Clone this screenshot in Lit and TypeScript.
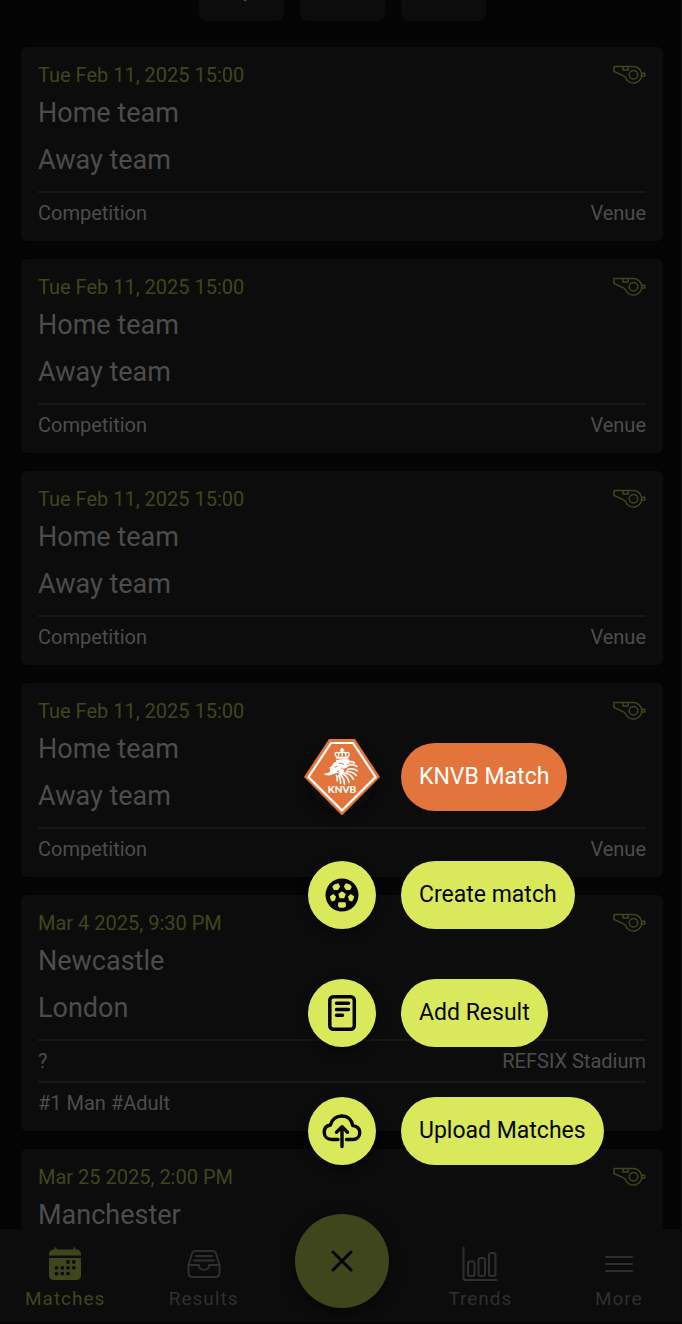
import { css, html, svg, LitElement } from "lit";
import { customElement, property, state } from "lit/decorators.js";
import { classMap } from "lit/directives/class-map.js";

interface Match {
  date: string;
  home: string;
  away?: string;
  competition?: string;
  venue?: string;
  tags?: string;
}

const template = { date: "Tue Feb 11, 2025 15:00", home: "Home team", away: "Away team", competition: "Competition", venue: "Venue" };

const MATCHES: Match[] = [
  template,
  template,
  template,
  template,
  { date: "Mar 4 2025, 9:30 PM", home: "Newcastle", away: "London", competition: "?", venue: "REFSIX Stadium", tags: "#1 Man #Adult" },
  { date: "Mar 25 2025, 2:00 PM", home: "Manchester" },
];

const icons = {
  whistle: svg`<svg width="34" height="20" viewBox="0 0 34 20" fill="none" stroke="currentColor" stroke-width="1.5" stroke-linejoin="round">
    <path d="M2 1.500H21a8.300 8.300 0 1 1-7.400 11.200C13.100 11.700 12.500 11.300 11.500 10.900L2 6.500z"/>
    <path d="M11 1.500v3.500h5.200V1.500"/>
    <circle cx="21.500" cy="9.800" r="4.300"/>
    <path d="M29.800 8.300h2.900v2.800h-2.900"/>
  </svg>`,
  knvb: svg`<svg width="78" height="78" viewBox="0 0 78 78">
    <path d="M26 1H52L77 39 39 77.500 1 39z" fill="#e3743b"/>
    <path d="M28 5H50L72.500 39 39 72.500 5.500 39z" fill="none" stroke="#fff" stroke-width="2.200"/>
    <g fill="#fff">
      <path d="M38.200 10h1.800v1.200h1.200v1.600H40V14h-1.800v-1.200H37v-1.600h1.200z"/>
      <path d="M33 18.800h12.600l-.5 1.900H33.500z"/>
      <path d="M26.500 29.500l2.300-1.500c1-2.400 2.400-4 4.800-4.600l-.9-1.600c2.600.3 4.300-.3 6.500-.8 3.400-.7 6.200 0 8.300 1.200l-3 1 2.500 2.500-3.500.5 1 3-3.500 1.500.5 3.500-4 3.700-2.300-3.200-3.200.8-3.500 1.300c-1.500.6-2.200 1-3.700.6-1.500-.5-2.900.1-4.100-1.600 1.600.3 2-.9 3.800-.7 1.400 0 2.300-1 2.600-2z"/>
    </g>
    <g fill="none" stroke="#fff" stroke-width="1.300" stroke-linecap="round">
      <path d="M33.300 18.500c-3-3 .2-5.300 2.200-3.300v3M45 18.500c3-3-.2-5.300-2.200-3.300v3M36 15.500c.5-2 5.800-2 6.300 0M39.100 13.500V18"/>
    </g>
    <g fill="none" stroke="#fff" stroke-width="1.700" stroke-linecap="round">
      <path d="M43 24.500c3.500-1.300 5.800-1.300 8.300.3M44 28c3.500-2 6.500-2 9.800.4M44.500 31.500c3.500-1.300 6.500-1 9.700 1.200M43.500 33.500c4-.2 7 1 9.700 3.800M42 35c3.800.6 6.500 2.500 8.300 6M40 36c3 1.300 5 3.800 6 8.300M38 37.500c2.200 2 3.200 4.700 3.500 8.700M35.800 37.500c1.500 2.500 2 5 1.700 7.700M33.500 37.500c.8 1.800 1 3.500.7 5.200"/>
    </g>
    <g fill="none" stroke="#e3743b" stroke-width="1">
      <path d="M31.500 29.200l3-1M36 25.500c2.200-.4 3.700 0 5 1M38 30c2 .2 3.500 1.500 4 3.500M34 33l2.500 1.200"/>
    </g>
    <text x="39" y="55" class="crest" text-anchor="middle" fill="#fff">KNVB</text>
  </svg>`,
  football: svg`<svg width="34" height="34" viewBox="0 0 34 34">
    <circle cx="17" cy="17" r="16.500" fill="#050505"/>
    <g fill="#d9e95b">
      <path d="M17 13.300l3.700 2.700-1.400 4.300h-4.600L13.300 16z"/>
      <path d="M9.200 6.500l4-1.200 2 3.300-2.300 3.300-4 .2-1.700-3.300z"/>
      <path d="M24.800 6.500l-4-1.200-2 3.300 2.300 3.300 4 .2 1.700-3.300z"/>
      <path d="M5 18.300l3.300-2.300 2.700 2.600-1 4-3 .8C5.700 22 5 20.200 5 18.300z"/>
      <path d="M29 18.300l-3.300-2.300-2.700 2.600 1 4 3 .8c1.300-1.400 2-3.200 2-5.100z"/>
      <path d="M13.500 24.200h7l.7 3.800-2 1.800h-4.400l-2-1.800z"/>
    </g>
  </svg>`,
  note: svg`<svg width="34" height="38" viewBox="0 0 34 38" fill="none" stroke="#050505" stroke-width="3.500" stroke-linecap="round">
    <rect x="4.800" y="2.800" width="24.500" height="32.500" rx="3.500"/>
    <path d="M11.500 9.300h12M11.500 15.500h12M11.500 21.300h6"/>
  </svg>`,
  upload: svg`<svg width="42" height="38" viewBox="0 0 42 38" fill="none" stroke="#050505" stroke-width="3.400" stroke-linecap="round" stroke-linejoin="round">
    <path d="M17 27.500H11c-4.500 0-7.800-3-7.800-7.200 0-4 2.400-6.700 6.200-7.300C10.800 7.500 15.400 4 20.800 4c5.700 0 10 3.800 10.900 9.600 4.300.5 7.100 3.100 7.100 6.900 0 4.400-3.300 7-7.200 7H25.500"/>
    <path d="M21 34.500V15M15.500 20.200l5.500-5.500 5.500 5.500"/>
  </svg>`,
  close: svg`<svg width="26" height="26" viewBox="0 0 26 26" fill="none" stroke="#050505" stroke-width="3" stroke-linecap="round">
    <path d="M4 4l18 18M22 4L4 22"/>
  </svg>`,
  calendar: svg`<svg width="36" height="36" viewBox="0 0 36 36" fill="currentColor">
    <path d="M2 9.500V8a4.500 4.500 0 0 1 4.500-4.500H7.500V2.300a1 1 0 0 1 2 0v1.200h17V2.300a1 1 0 0 1 2 0v1.200h1A4.500 4.500 0 0 1 34 8v1.500z"/>
    <path d="M2 12h32v17.500a4.500 4.500 0 0 1-4.500 4.500h-23A4.500 4.500 0 0 1 2 29.500z"/>
    <g fill="#0c0c0c">
      ${[[21, 16], [26.8, 16], [9.5, 21.8], [15.3, 21.8], [21, 21.8], [26.8, 21.8], [9.5, 27.6], [15.3, 27.6], [21, 27.6]].map(
        ([x, y]) => svg`<circle cx=${x} cy=${y} r="1.9"/>`
      )}
    </g>
  </svg>`,
  tray: svg`<svg width="36" height="36" viewBox="0 0 36 36" fill="none" stroke="currentColor" stroke-width="2" stroke-linecap="round" stroke-linejoin="round">
    <path d="M2.500 19L6 7.500c.5-1.700 1.600-2.500 3.300-2.500h17.400c1.700 0 2.800.8 3.300 2.500L33.500 19v8c0 2.500-1.500 4-4 4h-23c-2.500 0-4-1.500-4-4z"/>
    <path d="M2.500 19h10.300c.2 2.800 2.200 4.800 5.200 4.800s5-2 5.200-4.800h10.300M10 10h16M8 14.500h20"/>
  </svg>`,
  chart: svg`<svg width="36" height="36" viewBox="0 0 36 36" fill="none" stroke="currentColor" stroke-width="2" stroke-linecap="round" stroke-linejoin="round">
    <path d="M1.500 1.500V32a2 2 0 0 0 2 2H34.500"/>
    <rect x="6" y="15.500" width="6.500" height="14.500" rx="2"/>
    <rect x="16.500" y="12" width="6.500" height="18" rx="2"/>
    <rect x="27" y="7" width="6.500" height="23" rx="2"/>
  </svg>`,
  menu: svg`<svg width="36" height="36" viewBox="0 0 36 36" fill="none" stroke="currentColor" stroke-width="2" stroke-linecap="round">
    <path d="M5 11h26M5 18h26M5 25h26"/>
  </svg>`,
};

@customElement("match-card")
class MatchCard extends LitElement {
  @property({ attribute: false }) match!: Match;

  static styles = css`
    :host {
      display: block;
      padding: 16px 17px 8px;
      border-radius: 6px;
      background: #0c0c0c;
      color: #4c4c4c;
      font-size: 20px;
    }
    .top,
    .row {
      display: flex;
      justify-content: space-between;
      align-items: center;
    }
    .top {
      height: 24px;
      color: #40461b;
    }
    .teams {
      padding: 3px 0 7px;
      font-size: 27px;
      line-height: 47px;
    }
    .row {
      border-top: 2px solid #171717;
      line-height: 40px;
    }
  `;

  render() {
    const { date, home, away, competition, venue, tags } = this.match;
    return html`
      <div class="top"><span>${date}</span>${icons.whistle}</div>
      <div class="teams">
        <div>${home}</div>
        ${away ? html`<div>${away}</div>` : ""}
      </div>
      ${competition ? html`<div class="row"><span>${competition}</span><span>${venue}</span></div>` : ""}
      ${tags ? html`<div class="row"><span>${tags}</span></div>` : ""}
    `;
  }
}

@customElement("tab-bar")
class TabBar extends LitElement {
  @state() active = "Matches";

  static styles = css`
    :host {
      display: block;
      background: #0c0c0c;
      border-bottom: 2px solid #060606;
    }
    nav {
      display: grid;
      grid-template-columns: repeat(5, 1fr);
      margin: 0 -6px 0 -4px;
      padding: 17px 0 10px;
    }
    a {
      display: flex;
      flex-direction: column;
      align-items: center;
      gap: 3px;
      color: #2f2f2f;
      font-size: 19px;
      line-height: 27px;
      letter-spacing: 1px;
      text-decoration: none;
    }
    .active {
      color: #40461b;
    }
  `;

  tab(label: string, icon: unknown) {
    return html`<a href="#${label.toLowerCase()}" class=${classMap({ active: label === this.active })} @click=${() => (this.active = label)}
      >${icon}<span>${label}</span></a
    >`;
  }

  render() {
    return html`
      <nav>
        ${this.tab("Matches", icons.calendar)} ${this.tab("Results", icons.tray)}
        <span></span>
        ${this.tab("Trends", icons.chart)} ${this.tab("More", icons.menu)}
      </nav>
    `;
  }
}

@customElement("action-menu")
class ActionMenu extends LitElement {
  @state() open = true;

  static styles = css`
    :host {
      display: flex;
      flex-direction: column;
      align-items: center;
    }
    .actions {
      display: flex;
      flex-direction: column;
      gap: 50px;
      width: 68px;
      padding-bottom: 49px;
    }
    .action {
      display: flex;
      align-items: center;
      gap: 25px;
      width: max-content;
      padding: 0;
      border: 0;
      background: none;
      color: #050505;
      font: 23px Roboto, sans-serif;
      cursor: pointer;
    }
    .round {
      display: flex;
      align-items: center;
      justify-content: center;
      width: 68px;
      height: 68px;
      border-radius: 50%;
      background: #d9e95b;
      box-shadow: 0 4px 12px rgba(0, 0, 0, 0.4);
    }
    .round svg {
      flex: none;
    }
    .pill {
      padding: 0 18px;
      border-radius: 34px;
      background: #d9e95b;
      line-height: 68px;
    }
    .knvb {
      color: #fff;
    }
    .knvb .round {
      background: none;
    }
    .knvb .pill {
      background: #e3743b;
    }
    .crest {
      font: 900 10px Lato, sans-serif;
    }
    .fab {
      display: flex;
      align-items: center;
      justify-content: center;
      width: 94px;
      height: 94px;
      padding: 0;
      border: 0;
      border-radius: 50%;
      background: #40461b;
      box-shadow: 0 4px 14px rgba(0, 0, 0, 0.5);
      cursor: pointer;
    }
  `;

  action(label: string, icon: unknown, knvb = false) {
    return html`
      <button class=${classMap({ action: true, knvb })}>
        <span class="round">${icon}</span>
        <span class="pill">${label}</span>
      </button>
    `;
  }

  render() {
    return html`
      ${this.open
        ? html`<div class="actions">
            ${this.action("KNVB Match", icons.knvb, true)} ${this.action("Create match", icons.football)}
            ${this.action("Add Result", icons.note)} ${this.action("Upload Matches", icons.upload)}
          </div>`
        : ""}
      <button class="fab" aria-label="Close" @click=${() => (this.open = !this.open)}>${icons.close}</button>
    `;
  }
}

@customElement("app-root")
class AppRoot extends LitElement {
  static styles = css`
    :host {
      display: flex;
      flex-direction: column;
      position: relative;
      height: 100vh;
      overflow: hidden;
      background: #040404;
      font-family: Roboto, sans-serif;
    }
    main {
      flex: 1;
      min-height: 0;
      padding-left: 2px;
      overflow: hidden;
      box-shadow: inset -1px 0 #141414;
    }
    .countdown {
      display: flex;
      justify-content: center;
      gap: 16px;
      margin-top: -64px;
      padding-bottom: 26px;
    }
    .unit {
      box-sizing: border-box;
      width: 85px;
      height: 85px;
      padding-top: 43px;
      border-radius: 8px;
      background: #0c0c0c;
      color: #4c4c4c;
      font-size: 20px;
      line-height: 22px;
      text-align: center;
    }
    .matches {
      display: flex;
      flex-direction: column;
      gap: 18px;
      padding: 0 19px;
    }
    /* floats over the list and the tab bar */
    action-menu {
      position: absolute;
      left: 2px;
      right: 0;
      bottom: 16px;
    }
  `;

  render() {
    return html`
      <main>
        <div class="countdown">
          <div class="unit">Days</div>
          <div class="unit"></div>
          <div class="unit"></div>
        </div>
        <div class="matches">${MATCHES.map((match) => html`<match-card .match=${match}></match-card>`)}</div>
      </main>
      <tab-bar></tab-bar>
      <action-menu></action-menu>
    `;
  }
}
